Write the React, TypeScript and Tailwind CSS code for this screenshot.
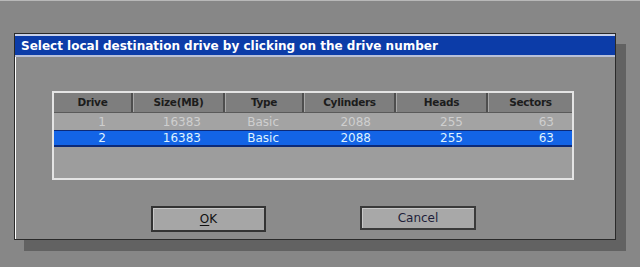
import React from "react";

const cols = [
  { h: "Drive", w: "w-[79px]", pr: "pr-[27px]", a: "1", b: "2" },
  { h: "Size(MB)", w: "w-[92px]", pr: "pr-[24px]", a: "16383", b: "16383" },
  { h: "Type", w: "w-[79px]", pr: "pr-[25px]", a: "Basic", b: "Basic" },
  { h: "Cylinders", w: "w-[92px]", pr: "pr-[25px]", a: "2088", b: "2088" },
  { h: "Heads", w: "w-[92px]", pr: "pr-[25px]", a: "255", b: "255" },
  { h: "Sectors", w: "flex-1", pr: "pr-[18px]", a: "63", b: "63" },
];

export default function App() {
  return (
    <div
      className="w-[640px] h-[267px] bg-[#878787] overflow-hidden border-t border-[#b8b8b8] pt-[32px] pl-[14px]"
      style={{ fontFamily: '"DejaVu Sans", sans-serif' }}
    >
      <div className="w-[602px] h-[207px] bg-[#8b8b8b] border border-[#2a2a2a] shadow-[10px_11px_0_#626262] flex flex-col">
        <div className="h-[23px] bg-[#0c3ca8] border-t-2 border-b-2 border-t-[#c8d0e8] border-b-[#b8c0d8] flex items-center pl-[6px] text-white font-bold text-[12px]">
          Select local destination drive by clicking on the drive number
        </div>
        <div className="flex-1 border-l border-white pl-[36px] pt-[34px]">
          <div className="w-[522px] h-[89px] border-2 border-[#e4e4e4] bg-[#9d9d9d] flex flex-col">
            <div className="flex h-[20px] bg-[#7e7e7e] border-b border-[#5a5a5a]">
              {cols.map((c, i) => (
                <div
                  key={c.h}
                  className={`${c.w} flex items-center justify-center text-[10.5px] font-bold tracking-[-0.3px] text-[#1c1c1c] ${i < cols.length - 1 ? "border-r-2 border-r-[#4e4e4e]" : ""} ${i > 0 ? "border-l border-l-[#a8a8a8]" : ""}`}
                >
                  {c.h}
                </div>
              ))}
            </div>
            <div className="flex h-[17px] bg-[#a3a3a3]">
              {cols.map((c) => (
                <div key={c.h} className={`${c.w} ${c.pr} flex items-center justify-end text-[12px] text-[#cfcfcf]`}>
                  {c.a}
                </div>
              ))}
            </div>
            <div className="flex h-[17px] bg-[#1364e6] border-t border-b-2 border-[#0c2a78]">
              {cols.map((c) => (
                <div key={c.h} className={`${c.w} ${c.pr} flex items-center justify-end text-[12px] text-[#dff2ff]`}>
                  {c.b}
                </div>
              ))}
            </div>
          </div>
          <div className="flex mt-[26px] ml-[99px] gap-[94px] items-start">
            <div className="w-[115px] h-[26px] border-2 border-[#333] bg-[#a6a6a6] shadow-[inset_1px_1px_0_#c8c8c8] flex items-center justify-center text-[12px] text-[#111]">
              <span><span className="underline underline-offset-2">O</span>K</span>
            </div>
            <div className="w-[116px] h-[24px] border-2 border-[#3a3a3a] bg-[#a8a8a8] shadow-[inset_1px_1px_0_#c8c8c8] flex items-center justify-center text-[12px] text-[#1e1e3a]">
              Cancel
            </div>
          </div>
        </div>
      </div>
    </div>
  );
}
